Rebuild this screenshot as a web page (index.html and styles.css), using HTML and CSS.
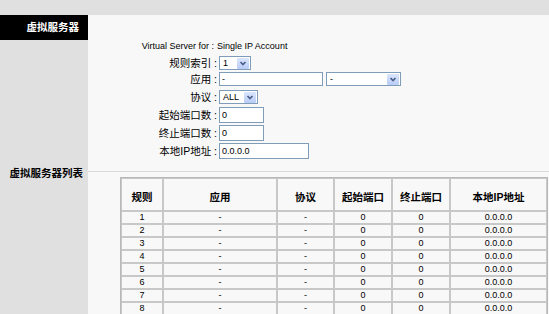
FILE: index.html
```html
<!DOCTYPE html>
<html lang="zh-CN">
<head>
<meta charset="utf-8">
<title>虚拟服务器</title>
<link rel="stylesheet" href="styles.css">
</head>
<body>
<div class="topbar"></div>
<div class="main">
  <aside class="side">
    <div class="side-title">虚拟服务器</div>
    <div class="side-label">虚拟服务器列表</div>
  </aside>
  <section class="content">
    <div class="form">
      <div class="lbl en">Virtual Server for :</div>
      <div class="val en">Single IP Account</div>

      <div class="lbl">规则索引 :</div>
      <div class="val">
        <div class="select w-idx"><span>1</span><i class="arrow"><svg viewBox="0 0 12 11" width="12" height="11"><path d="M3.5 4 L6 6.5 L8.5 4" fill="none" stroke="#4b5f8c" stroke-width="1.7"/></svg></i></div>
      </div>

      <div class="lbl">应用 :</div>
      <div class="val pair">
        <input class="inp w-app" type="text" value="-">
        <div class="select w-app2"><span>-</span><i class="arrow"><svg viewBox="0 0 12 11" width="12" height="11"><path d="M3.5 4 L6 6.5 L8.5 4" fill="none" stroke="#4b5f8c" stroke-width="1.7"/></svg></i></div>
      </div>

      <div class="lbl">协议 :</div>
      <div class="val">
        <div class="select w-proto"><span>ALL</span><i class="arrow"><svg viewBox="0 0 12 11" width="12" height="11"><path d="M3.5 4 L6 6.5 L8.5 4" fill="none" stroke="#4b5f8c" stroke-width="1.7"/></svg></i></div>
      </div>

      <div class="lbl tall">起始端口数 :</div>
      <div class="val"><input class="inp tall w-port" type="text" value="0"></div>

      <div class="lbl tall">终止端口数 :</div>
      <div class="val"><input class="inp tall w-port" type="text" value="0"></div>

      <div class="lbl tall">本地IP地址 :</div>
      <div class="val"><input class="inp tall w-ip" type="text" value="0.0.0.0"></div>
    </div>

    <div class="list">
      <table class="rules">
        <thead>
          <tr>
            <th class="c1">规则</th>
            <th class="c2">应用</th>
            <th class="c3">协议</th>
            <th class="c4">起始端口</th>
            <th class="c5">终止端口</th>
            <th class="c6">本地IP地址</th>
          </tr>
        </thead>
        <tbody>
          <tr><td>1</td><td>-</td><td>-</td><td>0</td><td>0</td><td>0.0.0.0</td></tr>
          <tr><td>2</td><td>-</td><td>-</td><td>0</td><td>0</td><td>0.0.0.0</td></tr>
          <tr><td>3</td><td>-</td><td>-</td><td>0</td><td>0</td><td>0.0.0.0</td></tr>
          <tr><td>4</td><td>-</td><td>-</td><td>0</td><td>0</td><td>0.0.0.0</td></tr>
          <tr><td>5</td><td>-</td><td>-</td><td>0</td><td>0</td><td>0.0.0.0</td></tr>
          <tr><td>6</td><td>-</td><td>-</td><td>0</td><td>0</td><td>0.0.0.0</td></tr>
          <tr><td>7</td><td>-</td><td>-</td><td>0</td><td>0</td><td>0.0.0.0</td></tr>
          <tr><td>8</td><td>-</td><td>-</td><td>0</td><td>0</td><td>0.0.0.0</td></tr>
        </tbody>
      </table>
    </div>
  </section>
</div>
</body>
</html>
```

FILE: styles.css
```css
* { box-sizing: border-box; }

html, body {
  margin: 0;
  height: 100%;
  overflow: hidden;
}

body {
  background: #f8f8f8;
  font-family: "Liberation Sans", "Noto Sans CJK SC", sans-serif;
  font-size: 9px;
  color: #000;
  display: flex;
  flex-direction: column;
}

.topbar {
  flex: none;
  height: 15px;
  background: #e0e0e0;
}

.main {
  flex: 1;
  display: grid;
  grid-template-columns: 88px 1fr;
}

.side {
  background: #e0e0e0;
}

.side-title {
  height: 25px;
  background: #000;
  color: #fff;
  font-weight: bold;
  font-size: 10.5px;
  line-height: 25px;
  text-align: right;
  padding-right: 9px;
}

.side-label {
  margin-top: 127px;
  font-weight: bold;
  font-size: 10.5px;
  line-height: 12px;
  text-align: right;
  padding-right: 5px;
  white-space: nowrap;
}

.content {
  display: flex;
  flex-direction: column;
}

.form {
  height: 156px;
  padding-top: 24px;
  display: grid;
  grid-template-columns: 129px auto;
  grid-template-rows: 17px 16px 18px 17px 18px 18px 16px;
  column-gap: 2px;
  align-items: start;
  justify-content: start;
}

.lbl {
  text-align: right;
  font-size: 10.5px;
  line-height: 14px;
  white-space: nowrap;
}

.lbl.tall { line-height: 16px; }

.lbl.en,
.val.en {
  font-size: 9px;
  line-height: 15px;
  white-space: nowrap;
}

.lbl.en { padding-right: 3px; }
.val.en { margin-left: -2px; }

.pair {
  display: flex;
  gap: 3px;
}

.select {
  display: flex;
  align-items: center;
  height: 14px;
  border: 1px solid #7f9db9;
  background: #fff;
}

.select span {
  flex: 1;
  padding-left: 3px;
  line-height: 12px;
  font-size: 9px;
}

.arrow {
  flex: none;
  display: flex;
  width: 12px;
  height: 11px;
  margin-right: 1px;
  background: linear-gradient(#dbe6fd, #b9ccf6);
  border-radius: 1px;
}

.arrow svg { display: block; }

.w-idx { width: 32px; }
.w-proto { width: 39px; }
.w-app2 { width: 75px; }

.inp {
  display: block;
  height: 14px;
  margin: 0;
  padding: 0 2px;
  border: 1px solid #7f9db9;
  background: #fff;
  font-family: "Liberation Sans", sans-serif;
  font-size: 9px;
  color: #000;
  outline: none;
}

.inp.tall { height: 16px; }

.w-app { width: 104px; }
.w-port { width: 45px; }
.w-ip { width: 90px; }

.list {
  border-top: 1px solid #d8d8d8;
  padding: 5px 0 0 32px;
}

.rules {
  border-collapse: separate;
  border-spacing: 0;
  table-layout: fixed;
  width: 428px;
  border: 1px solid #b8b8b8;
}

.rules th,
.rules td {
  border: 1px solid #c8c8c8;
  padding: 0;
  text-align: center;
}

.rules th {
  height: 33px;
  padding-top: 3px;
  font-size: 10.5px;
  font-weight: bold;
}

.rules td {
  height: 13px;
  line-height: 11px;
  font-size: 9px;
}

.c1 { width: 42px; }
.c2 { width: 114px; }
.c3 { width: 57px; }
.c4 { width: 58px; }
.c5 { width: 58px; }
.c6 { width: 97px; }
```
